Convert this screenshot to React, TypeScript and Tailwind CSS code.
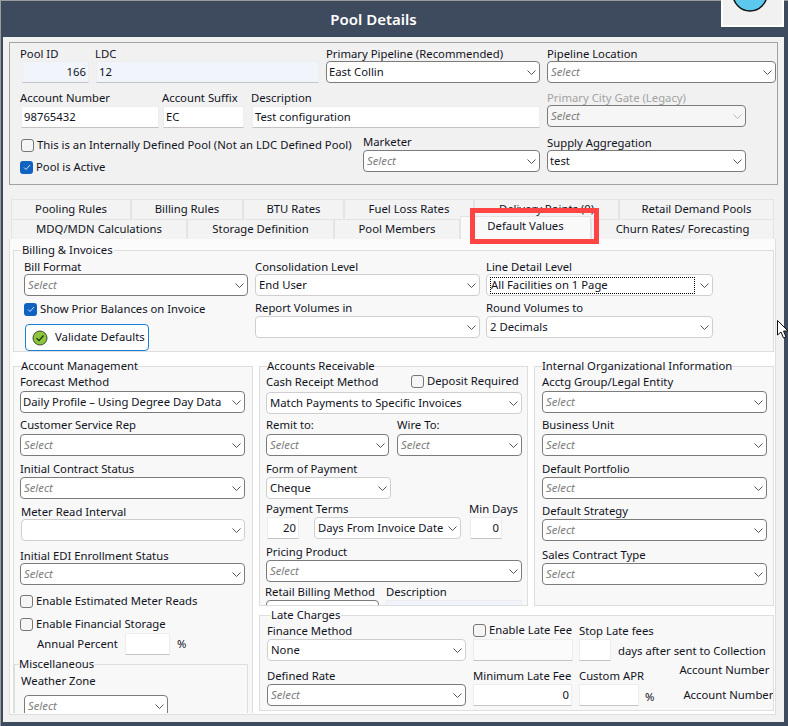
import type { ReactNode } from "react";

const Chevron = ({ faded }: { faded?: boolean }) => (
  <svg width="9" height="5" viewBox="0 0 9 5" fill="none" className="shrink-0">
    <path d="M0.5 0.5 L4.5 4.5 L8.5 0.5" stroke={faded ? "#b5b5b5" : "#555"} strokeWidth="1" />
  </svg>
);

const Select = ({
  className,
  value,
  light,
  disabled,
  focus,
  blank,
}: {
  className: string;
  value?: string;
  light?: boolean;
  disabled?: boolean;
  focus?: boolean;
  blank?: boolean;
}) => (
  <div
    className={`flex h-[22px] shrink-0 items-center justify-between rounded-[4px] border pr-[3px] ${
      light ? "border-[#cfcfcf] pl-[3px]" : "border-[#7b7b7b] pl-[2px]"
    } ${disabled ? "bg-[#f6f6f6]" : "bg-white"} ${className}`}
  >
    {value ? (
      <span
        className={`truncate whitespace-nowrap ${
          focus ? "mr-[5px] flex h-[17px] flex-1 items-center border border-dotted border-black" : ""
        }`}
      >
        {value}
      </span>
    ) : blank ? (
      <span />
    ) : (
      <span className="ml-[1px] text-[#7d7d7d] italic">Select</span>
    )}
    <Chevron faded={disabled} />
  </div>
);

const Input = ({
  className,
  value,
  right,
}: {
  className: string;
  value?: string;
  right?: boolean;
}) => (
  <div
    className={`flex h-[22px] shrink-0 items-center rounded-[1px] border-x border-t border-b border-[#ededed] border-b-[#c4c4c4] px-[2px] ${
      right ? "justify-end" : ""
    } ${className}`}
  >
    {value}
  </div>
);

const Field = ({
  label,
  className,
  children,
  muted,
}: {
  label: string;
  className?: string;
  children?: ReactNode;
  muted?: boolean;
}) => (
  <div className={`flex shrink-0 flex-col ${className ?? ""}`}>
    <div className={`h-[14px] leading-[14px] whitespace-nowrap ${muted ? "text-[#a3a3a3]" : ""}`}>
      {label}
    </div>
    {children}
  </div>
);

const Check = ({ label, checked, className }: { label: string; checked?: boolean; className?: string }) => (
  <div className={`flex h-[13px] items-center gap-[3px] whitespace-nowrap ${className ?? ""}`}>
    {checked ? (
      <span className="flex h-[13px] w-[13px] shrink-0 items-center justify-center rounded-[3px] bg-[#0f62c0]">
        <svg width="8" height="7" viewBox="0 0 8 7" fill="none">
          <path d="M1 3.5 L3 5.5 L7 1" stroke="#cfe2f7" strokeWidth="1" />
        </svg>
      </span>
    ) : (
      <span className="h-[13px] w-[13px] shrink-0 rounded-[3px] border border-[#777] bg-[#f5f5f5]" />
    )}
    {label}
  </div>
);

const Group = ({
  title,
  className,
  legendClass,
  children,
}: {
  title: string;
  className: string;
  legendClass: string;
  children: ReactNode;
}) => (
  <fieldset className={`shrink-0 overflow-hidden border border-[#dedede] bg-[#f8f8f8] ${className}`}>
    <legend className={`h-[14px] leading-[14px] whitespace-nowrap ${legendClass}`}>{title}</legend>
    {children}
  </fieldset>
);

const Tab = ({ label, className }: { label: string; className: string }) => (
  <div
    className={`flex h-[20px] shrink-0 items-center justify-center border-t border-r border-l border-[#e4e4e4] bg-[#f3f3f3] pb-[1px] ${className}`}
  >
    {label}
  </div>
);

export default function App() {
  return (
    <div className="relative h-[726px] w-[788px] overflow-hidden bg-[#3e4a5d] pr-[4px] pb-[4px] pl-[3px] font-['Noto_Sans','Open_Sans',sans-serif] text-[11.3px] text-[#11131c] shadow-[inset_1px_1px_0_#9c9c9c]">
      {/* title bar */}
      <div className="flex h-[37px] items-center justify-center pt-[1px] pr-[40px] text-[15px] font-semibold text-white">
        Pool Details
      </div>

      <div className="h-[685px] bg-[#f1f1f1] pt-[5px]">
        {/* pool header */}
        <div className="ml-[6px] h-[143px] w-[769px] border border-[#a3a3a3] pt-[4px]">
          <div className="flex">
            <Field label="Pool ID" className="ml-[10px] w-[75px]">
              <Input className="ml-[2px] w-[67px] bg-[#f1f5fb]" value="166" right />
            </Field>
            <Field label="LDC" className="w-[231px]">
              <Input className="ml-[1px] w-[223px] bg-[#f1f5fb]" value="12" />
            </Field>
            <Field label="Primary Pipeline (Recommended)" className="w-[221px]">
              <Select className="w-[214px]" value="East Collin" />
            </Field>
            <Field label="Pipeline Location">
              <Select className="w-[229px]" />
            </Field>
          </div>
          <div className="mt-[8px] flex">
            <Field label="Account Number" className="ml-[10px] w-[142px]">
              <Input className="mt-[1px] ml-[1px] w-[138px] bg-white" value="98765432" />
            </Field>
            <Field label="Account Suffix" className="w-[89px]">
              <Input className="mt-[1px] ml-[1px] w-[81px] bg-white" value="EC" />
            </Field>
            <Field label="Description" className="w-[296px]">
              <Input className="mt-[1px] ml-[1px] w-[288px] bg-white" value="Test configuration" />
            </Field>
            <Field label="Primary City Gate (Legacy)" muted>
              <Select className="w-[199px]" disabled />
            </Field>
          </div>
          <div className="mt-[7px] flex">
            <div className="ml-[11px] flex w-[342px] flex-col">
              <Check className="mt-[4px]" label="This is an Internally Defined Pool (Not an LDC Defined Pool)" />
              <Check className="mt-[9px] -ml-[1px]" label="Pool is Active" checked />
            </div>
            <Field label="Marketer" className="w-[184px]">
              <Select className="mt-[1px] w-[177px]" />
            </Field>
            <Field label="Supply Aggregation" className="pt-[1px]">
              <Select className="w-[199px]" value="test" />
            </Field>
          </div>
        </div>

        {/* tabs */}
        <div className="mt-[14px] ml-[8px] flex">
          <Tab label="Pooling Rules" className="w-[120px]" />
          <Tab label="Billing Rules" className="w-[112px]" />
          <Tab label="BTU Rates" className="w-[101px]" />
          <Tab label="Fuel Loss Rates" className="w-[130px]" />
          <Tab label="Delivery Points (0)" className="w-[145px]" />
          <Tab label="Retail Demand Pools" className="w-[155px]" />
        </div>
        <div className="ml-[8px] flex">
          <Tab label="MDQ/MDN Calculations" className="w-[176px]" />
          <Tab label="Storage Definition" className="w-[147px]" />
          <Tab label="Pool Members" className="w-[126px]" />
          <div className="-mt-[3px] flex h-[23px] w-[131px] shrink-0 items-center justify-center border-t border-r border-l border-[#e4e4e4] bg-[#f9f9f9] pb-[3px]">
            Default Values
          </div>
          <Tab label="Churn Rates/ Forecasting" className="w-[183px]" />
        </div>

        {/* tab body */}
        <div className="ml-[6px] h-[476px] w-[767px] overflow-hidden border border-t-0 border-[#dfdfdf] bg-[#fbfbfb] pt-[4px]">
          <Group
            title="Billing & Invoices"
            className="ml-[3px] h-[109px] w-[761px]"
            legendClass="ml-[7px] px-[1px]"
          >
            <div className="flex pt-[3px]">
              <div className="ml-[10px] flex w-[231px] flex-col">
                <Field label="Bill Format">
                  <Select className="w-[224px]" />
                </Field>
                <Check className="mt-[7px]" label="Show Prior Balances on Invoice" checked />
                <button className="mt-[8px] ml-[1px] flex h-[27px] w-[124px] items-center gap-[7px] rounded-[4px] border border-[#1c7fd6] bg-white pl-[6px]">
                  <svg width="16" height="16" viewBox="0 0 16 16" fill="none">
                    <circle cx="8" cy="8" r="7" fill="#8cc63f" stroke="#3c4a2a" strokeWidth="1" />
                    <path d="M4.5 8.2 L7 10.7 L11.5 5.5" stroke="#1d2a12" strokeWidth="1.2" />
                  </svg>
                  Validate Defaults
                </button>
              </div>
              <div className="flex w-[231px] flex-col">
                <Field label="Consolidation Level">
                  <Select className="w-[225px]" value="End User" light />
                </Field>
                <Field label="Report Volumes in" className="mt-[5px]">
                  <Select className="mt-[1px] w-[225px]" light blank />
                </Field>
              </div>
              <div className="flex flex-col">
                <Field label="Line Detail Level">
                  <Select className="w-[227px]" value="All Facilities on 1 Page" light focus />
                </Field>
                <Field label="Round Volumes to" className="mt-[5px]">
                  <Select className="mt-[1px] w-[227px]" value="2 Decimals" light />
                </Field>
              </div>
            </div>
          </Group>

          <div className="ml-[3px] h-[7px] bg-white" />

          <div className="ml-[3px] flex gap-[6px] bg-white">
            {/* account management */}
            <Group title="Account Management" className="h-[354px] w-[240px] border-b-0" legendClass="ml-[7px]">
              <div className="flex flex-col pt-[2px]">
                <Field label="Forecast Method" className="ml-[6px]">
                  <Select className="mt-[2px] w-[225px]" value="Daily Profile – Using Degree Day Data" />
                </Field>
                <Field label="Customer Service Rep" className="mt-[5px] ml-[6px]">
                  <Select className="mt-[2px] w-[225px]" />
                </Field>
                <Field label="Initial Contract Status" className="mt-[6px] ml-[6px]">
                  <Select className="mt-[1px] w-[225px]" />
                </Field>
                <Field label="Meter Read Interval" className="mt-[6px] ml-[7px]">
                  <Select className="w-[224px]" light blank />
                </Field>
                <Field label="Initial EDI Enrollment Status" className="mt-[8px] ml-[6px]">
                  <Select className="w-[225px]" />
                </Field>
                <Check className="mt-[10px] ml-[6px]" label="Enable Estimated Meter Reads" />
                <Check className="mt-[10px] ml-[6px]" label="Enable Financial Storage" />
                <div className="mt-[2px] ml-[23px] flex items-center">
                  <span className="w-[88px]">Annual Percent</span>
                  <Input className="w-[45px] bg-white" />
                  <span className="ml-[7px]">%</span>
                </div>
                <Group title="Miscellaneous" className="mt-[2px] h-[79px] w-[234px] border-b-0" legendClass="ml-[4px]">
                  <Field label="Weather Zone" className="mt-[3px] ml-[6px]">
                    <Select className="mt-[7px] ml-[3px] w-[144px]" />
                  </Field>
                </Group>
              </div>
            </Group>

            <div className="flex flex-col">
              <div className="flex gap-[6px]">
                {/* accounts receivable */}
                <Group title="Accounts Receivable" className="h-[247px] w-[269px]" legendClass="ml-[7px]">
                  <div className="flex flex-col pt-[2px]">
                    <div className="ml-[6px] flex h-[14px] items-center">
                      <span className="w-[145px]">Cash Receipt Method</span>
                      <Check className="-mt-[2px]" label="Deposit Required" />
                    </div>
                    <Select className="mt-[3px] ml-[6px] w-[256px]" value="Match Payments to Specific Invoices" light />
                    <div className="mt-[4px] ml-[6px] flex gap-[8px]">
                      <Field label="Remit to:">
                        <Select className="mt-[2px] w-[123px]" />
                      </Field>
                      <Field label="Wire To:">
                        <Select className="mt-[2px] w-[125px]" />
                      </Field>
                    </div>
                    <Field label="Form of Payment" className="mt-[6px] ml-[6px]">
                      <Select className="mt-[1px] w-[125px]" value="Cheque" light />
                    </Field>
                    <div className="mt-[3px] ml-[6px] flex">
                      <Field label="Payment Terms" className="w-[203px]">
                        <div className="mt-[1px] flex">
                          <Input className="ml-[1px] w-[32px] bg-white" value="20" right />
                          <Select className="ml-[15px] w-[147px]" value="Days From Invoice Date" light />
                        </div>
                      </Field>
                      <Field label="Min Days">
                        <Input className="mt-[1px] ml-[1px] w-[32px] bg-white" value="0" right />
                      </Field>
                    </div>
                    <Field label="Pricing Product" className="mt-[6px] ml-[6px]">
                      <Select className="mt-[1px] w-[256px]" />
                    </Field>
                    <div className="mt-[3px] ml-[5px] flex">
                      <Field label="Retail Billing Method" className="w-[121px]">
                        <Select className="mt-[1px] ml-[1px] w-[113px]" blank />
                      </Field>
                      <Field label="Description">
                        <Input className="mt-[1px] w-[136px] bg-[#f1f5fb]" />
                      </Field>
                    </div>
                  </div>
                </Group>

                {/* internal org */}
                <Group
                  title="Internal Organizational Information"
                  className="h-[247px] w-[240px]"
                  legendClass="ml-[7px]"
                >
                  <div className="ml-[7px] flex flex-col pt-[2px]">
                    <Field label="Acctg Group/Legal Entity">
                      <Select className="mt-[2px] w-[225px]" />
                    </Field>
                    <Field label="Business Unit" className="mt-[5px]">
                      <Select className="mt-[2px] w-[225px]" />
                    </Field>
                    <Field label="Default Portfolio" className="mt-[6px]">
                      <Select className="mt-[1px] w-[225px]" />
                    </Field>
                    <Field label="Default Strategy" className="mt-[5px]">
                      <Select className="mt-[1px] w-[225px]" />
                    </Field>
                    <Field label="Sales Contract Type" className="mt-[7px]">
                      <Select className="mt-[1px] w-[225px]" />
                    </Field>
                  </div>
                </Group>
              </div>

              {/* late charges */}
              <Group title="Late Charges" className="mt-[2px] h-[103px] w-[515px]" legendClass="ml-[10px] px-[1px]">
                <div className="flex pt-[2px]">
                  <Field label="Finance Method" className="ml-[7px] w-[206px]">
                    <Select className="mt-[1px] w-[199px]" value="None" light />
                  </Field>
                  <div className="flex w-[106px] flex-col">
                    <Check label="Enable Late Fee" />
                    <Input className="mt-[2px] w-[100px] bg-[#fbfbfb]" />
                  </div>
                  <Field label="Stop Late fees">
                    <div className="mt-[1px] flex items-center">
                      <Input className="w-[32px] bg-white" />
                      <span className="ml-[7px] pt-[3px] whitespace-nowrap">days after sent to Collection</span>
                    </div>
                  </Field>
                </div>
                <div className="mt-[8px] flex">
                  <Field label="Defined Rate" className="ml-[7px] w-[206px]">
                    <Select className="mt-[1px] w-[199px]" />
                  </Field>
                  <Field label="Minimum Late Fee" className="w-[106px]">
                    <Input className="mt-[1px] w-[99px] bg-white" value="0" right />
                  </Field>
                  <Field label="Custom APR" className="w-[66px]">
                    <Input className="mt-[1px] w-[60px] bg-white" value="" />
                  </Field>
                  <span className="mt-[20px] h-[14px]">%</span>
                  <div className="-mt-[6px] ml-[25px] flex flex-col whitespace-nowrap">
                    <span className="h-[14px] leading-[14px]">Account Number</span>
                    <span className="mt-[11px] ml-[4px] h-[14px] leading-[14px]">Account Number</span>
                  </div>
                </div>
              </Group>
            </div>
          </div>
        </div>
      </div>

      {/* logo tile poking out over the title bar */}
      <div className="absolute top-0 left-[721px] h-[27px] w-[63px] overflow-hidden border-2 border-t-0 border-white bg-[#f1f1f1]">
        <svg width="59" height="25" viewBox="0 0 59 25">
          <circle cx="27" cy="-6" r="17" fill="#5cc8ee" stroke="#111" strokeWidth="1.5" />
        </svg>
      </div>

      {/* annotation rectangle around the selected tab */}
      <div className="absolute top-[208px] left-[470px] h-[36px] w-[129px] border-[5px] border-[#ff4444]" />

      {/* mouse cursor */}
      <svg className="absolute top-[320px] left-[777px]" width="11" height="20" viewBox="0 0 11 20">
        <path d="M0.5 0.5 L0.5 15 L4 12 L6.5 18 L9 17 L6.5 11 L11 11 Z" fill="#fff" stroke="#111" strokeWidth="1" />
      </svg>
    </div>
  );
}
